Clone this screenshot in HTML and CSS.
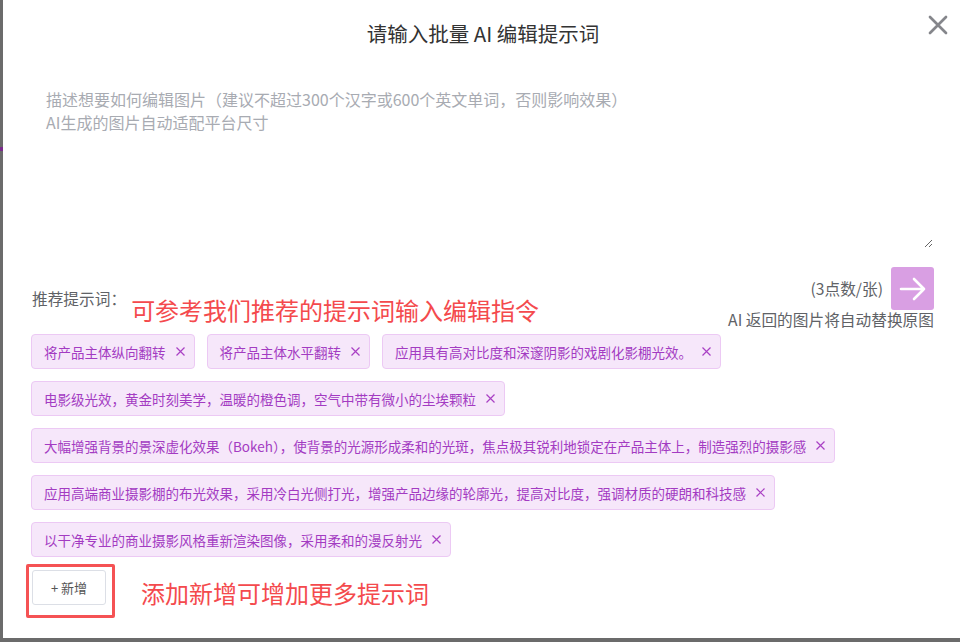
FILE: index.html
```html
<!DOCTYPE html>
<html lang="zh-CN">
<head>
  <meta charset="UTF-8">
  <meta name="viewport" content="width=device-width, initial-scale=1.0">
  <title>批量 AI 编辑</title>
  <link rel="stylesheet" href="styles.css">
</head>
<body>

  <!-- Modal -->
  <div class="modal">
    <div class="modal-header">
      <h2 class="modal-title">请输入批量 AI 编辑提示词</h2>
      <button class="modal-close" aria-label="关闭">
        <svg width="20" height="20" viewBox="0 0 20 20">
          <path d="M2 2 L18 18 M18 2 L2 18" stroke="#85868b" stroke-width="2.7" stroke-linecap="round" fill="none"/>
        </svg>
      </button>
    </div>

    <textarea class="prompt-input" placeholder="描述想要如何编辑图片（建议不超过300个汉字或600个英文单词，否则影响效果）&#10;AI生成的图片自动适配平台尺寸"></textarea>

    <!-- Recommend header -->
    <div class="recommend-head">
      <div class="recommend-left">
        <span class="recommend-label">推荐提示词：</span>
        <span class="note note-top">可参考我们推荐的提示词输入编辑指令</span>
      </div>
      <div class="recommend-right">
        <div class="cost-row">
          <span class="cost">(3点数/张)</span>
          <button class="submit" aria-label="提交">
            <svg width="30" height="30" viewBox="0 0 30 30">
              <path d="M3 15 H26 M16 5 L26 15 L16 25" stroke="#fff" stroke-width="2.6" stroke-linecap="round" stroke-linejoin="round" fill="none"/>
            </svg>
          </button>
        </div>
        <div class="replace-tip">AI 返回的图片将自动替换原图</div>
      </div>
    </div>

    <!-- Tags -->
    <div class="tags" id="tags"></div>

    <div class="add-row">
      <div class="add-mark">
        <button class="add-btn">+ 新增</button>
      </div>
      <span class="note note-bottom">添加新增可增加更多提示词</span>
    </div>
  </div>

  <script>
    document.addEventListener('DOMContentLoaded', function () {
      const tags = document.getElementById('tags');
      const prompts = [
        '将产品主体纵向翻转',
        '将产品主体水平翻转',
        '应用具有高对比度和深邃阴影的戏剧化影棚光效。',
        '电影级光效，黄金时刻美学，温暖的橙色调，空气中带有微小的尘埃颗粒',
        '大幅增强背景的景深虚化效果（Bokeh），使背景的光源形成柔和的光斑，焦点极其锐利地锁定在产品主体上，制造强烈的摄影感',
        '应用高端商业摄影棚的布光效果，采用冷白光侧打光，增强产品边缘的轮廓光，提高对比度，强调材质的硬朗和科技感',
        '以干净专业的商业摄影风格重新渲染图像，采用柔和的漫反射光'
      ];

      prompts.forEach((text) => {
        const tag = document.createElement('span');
        tag.className = 'tag';
        tag.innerHTML = `<span class="tag-text">${text}</span>
          <svg class="tag-close" width="9" height="9" viewBox="0 0 9 9">
            <path d="M0.5 0.5 L8.5 8.5 M8.5 0.5 L0.5 8.5" stroke="#a940c4" stroke-width="1.2" fill="none"/>
          </svg>`;
        tag.querySelector('.tag-close').addEventListener('click', () => tag.remove());
        tags.appendChild(tag);
      });
    });
  </script>
</body>
</html>
```

FILE: styles.css
```css
/* General Styles */
body {
  margin: 0;
  background: #6b6b6b;
  font-family: "Noto Sans CJK SC", "Noto Sans", sans-serif;
  overflow: hidden;
  position: relative;
}

/* Page behind the overlay peeking out */
body::before {
  content: "";
  position: absolute;
  top: 147px;
  left: 0;
  width: 3px;
  height: 4px;
  background: #7a2b8c;
}

/* Modal */
.modal {
  margin-left: 3px;
  height: 638px;
  background: #ffffff;
  display: flex;
  flex-direction: column;
  box-sizing: border-box;
  padding: 0 24px 0 29px;
}

.modal-header {
  position: relative;
  height: 64px;
  display: flex;
  justify-content: center;
  align-items: center;
}

.modal-title {
  margin: 0 0 0 -2px;
  font-size: 20.5px;
  font-weight: 400;
  color: #333333;
  line-height: 28px;
  padding-top: 1px;
}

.modal-close {
  position: absolute;
  top: 15px;
  right: -12px;
  background: transparent;
  border: none;
  padding: 0;
  cursor: pointer;
}

/* Prompt input */
.prompt-input {
  margin-top: 16px;
  height: 168px;
  width: 901px;
  box-sizing: border-box;
  border: none;
  outline: none;
  padding: 8px 14px;
  font-family: inherit;
  font-size: 16px;
  line-height: 23px;
  color: #333;
}

.prompt-input::placeholder {
  color: #a8abb2;
}

/* Recommend header */
.recommend-head {
  margin-top: 19px;
  display: flex;
  justify-content: space-between;
  align-items: flex-start;
  width: 902px;
}

.recommend-left {
  display: flex;
  align-items: flex-start;
}

.recommend-label {
  margin-top: 21px;
  font-size: 15.7px;
  line-height: 22px;
  color: #606266;
}

.note {
  color: #f44a4d;
  font-size: 24px;
  line-height: 30px;
}

.note-top {
  margin-top: 28px;
  margin-left: 5px;
}

.recommend-right {
  display: flex;
  flex-direction: column;
  align-items: flex-end;
}

.cost-row {
  display: flex;
  align-items: center;
  gap: 8px;
}

.cost,
.replace-tip {
  font-size: 15.7px;
  line-height: 20px;
  color: #606266;
}

.submit {
  width: 43px;
  height: 43px;
  border: none;
  border-radius: 3px;
  background: #d99fe3;
  display: flex;
  justify-content: center;
  align-items: center;
  padding: 0;
  cursor: pointer;
}

/* Tags */
.tags {
  margin-top: 4px;
  display: flex;
  flex-wrap: wrap;
  gap: 12px;
  width: 905px;
  margin-left: -1px;
}

.tag {
  height: 35px;
  box-sizing: border-box;
  display: inline-flex;
  align-items: center;
  padding: 0 9px 0 12px;
  background: #f6e7fa;
  border: 1px solid #ecc9f4;
  border-radius: 4px;
  color: #a33bc2;
  font-size: 13.5px;
  line-height: 20px;
  white-space: nowrap;
}

.tag-close {
  margin-left: 10px;
  cursor: pointer;
}

/* Add row */
.add-row {
  margin-top: 7px;
  display: flex;
  align-items: center;
}

.add-mark {
  margin-left: -6px;
  border: 3px solid #f55254;
  border-radius: 2px;
  padding: 3px 6px 10px 3px;
}

.add-btn {
  width: 74px;
  height: 35px;
  background: #ffffff;
  border: 1px solid #dcdfe6;
  border-radius: 3px;
  font-family: inherit;
  font-size: 13px;
  color: #555;
  cursor: pointer;
}

.note-bottom {
  margin-left: 26px;
  margin-top: 4px;
}
```
